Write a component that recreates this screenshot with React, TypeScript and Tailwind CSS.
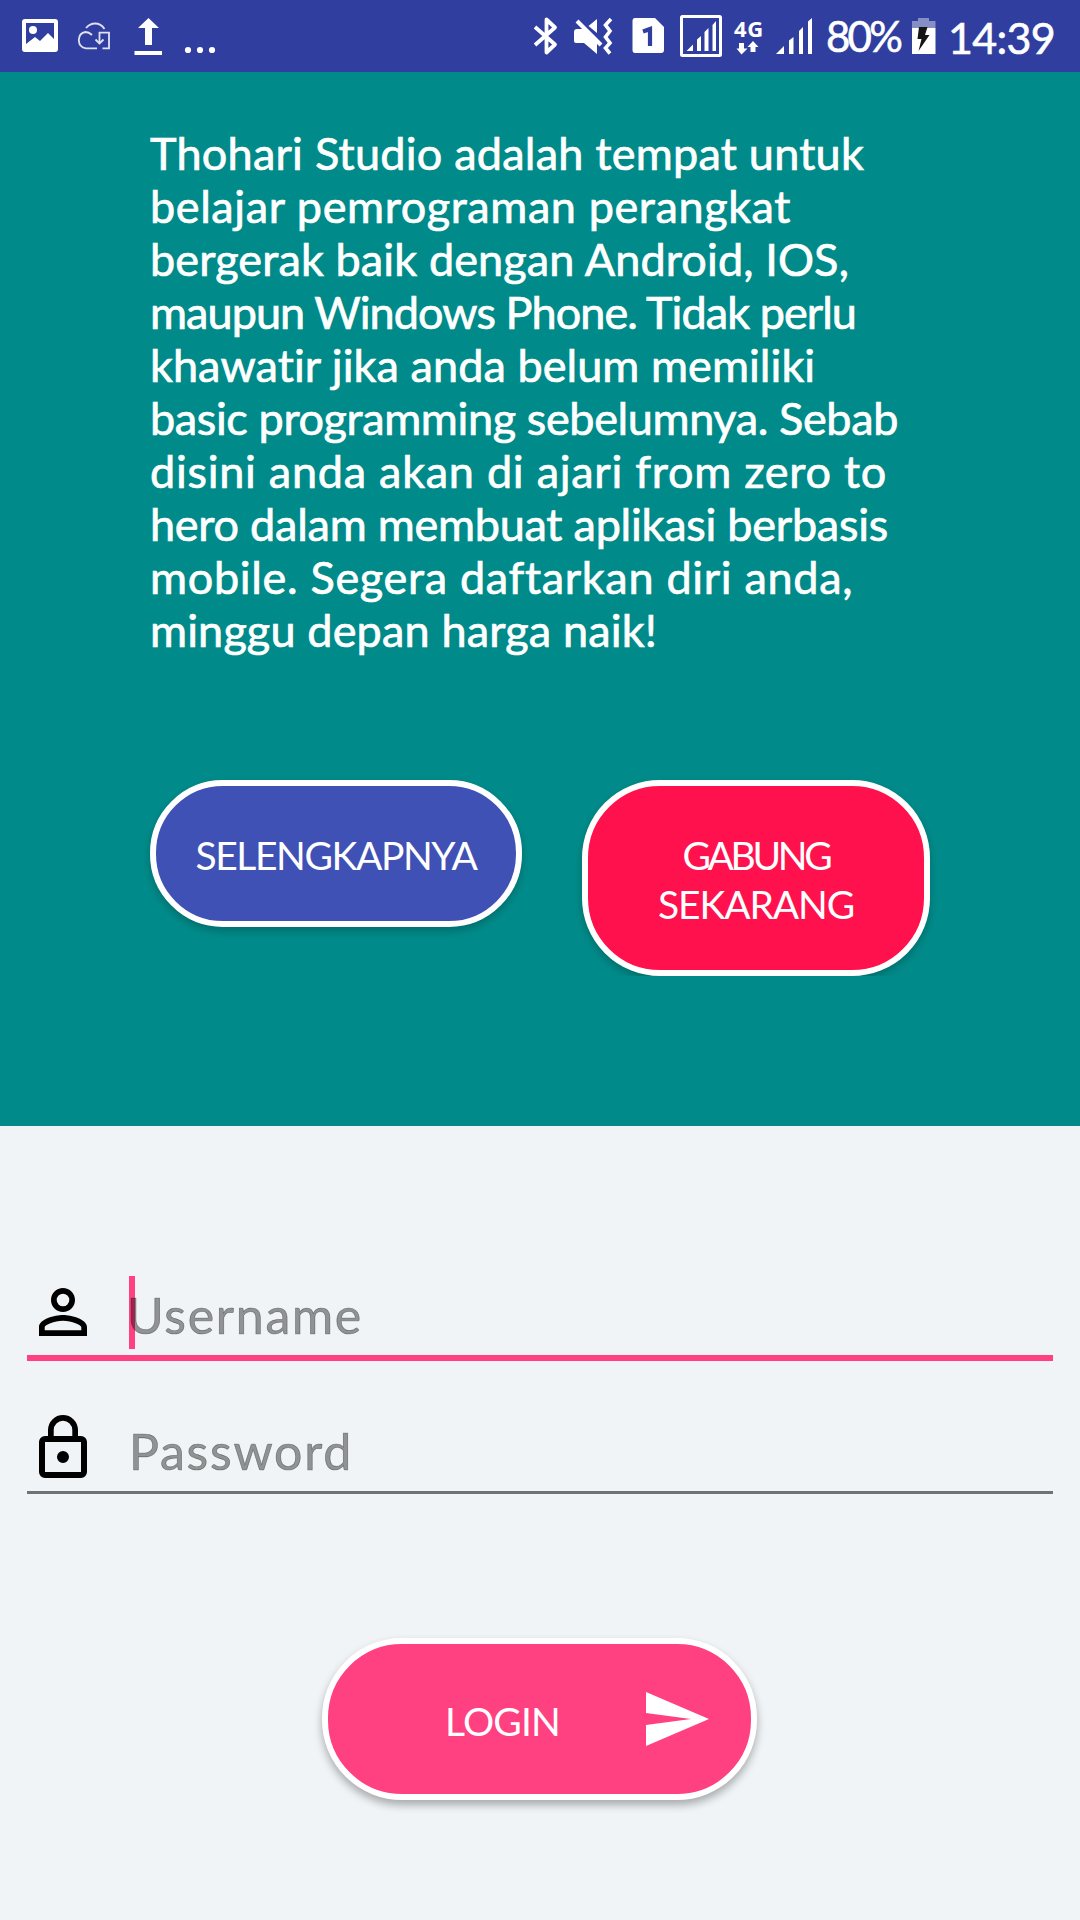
import { useLayoutEffect, useRef } from "react";

/** Single line of text whose tracking is adjusted so that it spans `width` pixels. */
function FitText({ text, width, className = "" }: { text: string; width: number; className?: string }) {
  const ref = useRef<HTMLSpanElement>(null);
  useLayoutEffect(() => {
    const el = ref.current;
    if (!el) return;
    el.style.letterSpacing = "0px";
    const natural = el.getBoundingClientRect().width;
    el.style.letterSpacing = `${(width - natural) / text.length}px`;
  }, [text, width]);
  return (
    <span ref={ref} className={`inline-block w-max whitespace-pre ${className}`}>
      {text}
    </span>
  );
}

const paragraph: { text: string; width: number }[] = [
  { text: "Thohari Studio adalah tempat untuk", width: 714 },
  { text: "belajar pemrograman perangkat", width: 641 },
  { text: "bergerak baik dengan Android, IOS,", width: 699 },
  { text: "maupun Windows Phone. Tidak perlu", width: 706 },
  { text: "khawatir jika anda belum memiliki", width: 666 },
  { text: "basic programming sebelumnya. Sebab", width: 748 },
  { text: "disini anda akan di ajari from zero to", width: 737 },
  { text: "hero dalam membuat aplikasi berbasis", width: 738 },
  { text: "mobile. Segera daftarkan diri anda,", width: 702 },
  { text: "minggu depan harga naik!", width: 507 },
];

function StatusBar() {
  return (
    <header className="flex h-[72px] items-start bg-[#303f9f] text-white">
      <svg className="ml-5 h-[72px] w-10 shrink-0" viewBox="20 0 40 72">
        <path
          fill="currentColor"
          fillRule="evenodd"
          d="M25 19H55Q58 19 58 22V49Q58 52 55 52H25Q22 52 22 49V22Q22 19 25 19ZM26 23V44L35 37L40 41L48 33L54 39V23Z"
        />
        <circle cx="33" cy="30" r="4" fill="currentColor" />
      </svg>
      <svg className="ml-4 h-[72px] w-9 shrink-0" viewBox="76 0 36 72" fill="none" stroke="#dfe2f3" strokeWidth="1.8">
        <path d="M86 28Q90 23.500 95 23.500Q101 23.500 104.500 29" />
        <path d="M92 35Q89 32 85.500 32Q79 33 78.800 40Q79 47.500 86 48.300H97" />
        <path d="M99.500 43V32.600H109V48.300H102.500" />
        <path d="M95.500 39.500L99.500 43.500L103.500 39.500" />
      </svg>
      <svg className="ml-5 h-[72px] w-8 shrink-0" viewBox="132 0 32 72" fill="currentColor">
        <path d="M148.500 18L159 28H152V45H145V28H138Z" />
        <path d="M134.500 51H162V55H134.500Z" />
      </svg>
      <svg className="ml-5 h-[72px] w-8 shrink-0" viewBox="184 0 32 72" fill="currentColor">
        <circle cx="188" cy="50" r="3.100" />
        <circle cx="200" cy="50" r="3.100" />
        <circle cx="212" cy="50" r="3.100" />
      </svg>

      <svg className="ml-auto h-[72px] w-7 shrink-0" viewBox="532 0 28 72" fill="none" stroke="currentColor" strokeWidth="3.800">
        <path d="M535 27L555 44.500L546.500 52.500V19.500L555 27.500L535 45" strokeLinejoin="round" />
      </svg>
      <svg className="ml-3 h-[72px] w-11 shrink-0" viewBox="572 0 44 72">
        <path fill="currentColor" d="M574 32Q574 29 577 29H583L597 43V54L584 43H576Q574 43 574 41Z M597 19V33L588.500 26Z" />
        <path fill="none" stroke="currentColor" strokeWidth="4" d="M577 21L601 45" />
        <path fill="none" stroke="currentColor" strokeWidth="3.600" d="M611 19L605.500 25L610 31L605.500 37L610 43L605.500 48L610 53.500" />
      </svg>
      <svg className="ml-4 h-[72px] w-8 shrink-0" viewBox="632 0 32 72">
        <path fill="currentColor" d="M635 18H655L664 27V50Q664 53 661 53H635Q632.500 53 632.500 50V21Q632.500 18 635 18Z" />
        <path fill="none" stroke="#303f9f" strokeWidth="4.200" d="M643 31.500L650 29V46" />
      </svg>
      <svg className="ml-4 h-[72px] w-[42px] shrink-0" viewBox="680 0 42 72" fill="currentColor">
        <rect x="681.500" y="16.500" width="39" height="39" rx="1" fill="none" stroke="currentColor" strokeWidth="3" />
        <path d="M686.500 51L693 44.500V51Z M697 51V39.500L701 36V51Z M704.500 51V32L708.500 28V51Z M712.500 51V25L716 21V51Z" />
      </svg>
      <div className="ml-3 flex w-[30px] shrink-0 flex-col items-center pt-4">
        <FitText text="4G" width={30} className="font-['Open_Sans'] text-[22px] leading-6 font-bold" />
        <svg className="h-4 w-[30px]" viewBox="734 40 30 16" fill="currentColor">
          <path d="M739 43H744V48.500H747.500L741.500 54.500L736.500 48.500H739Z M750.500 52V47H747.500L753 41L758.500 47H755.500V52Z" />
        </svg>
      </div>
      <svg className="ml-3 h-[72px] w-9 shrink-0" viewBox="776 0 36 72" fill="currentColor">
        <path d="M776 54L784 46V54Z M789 54V40.500L793.500 37V54Z M799 54V31L803 27V54Z M808 54V21.500L812 18V54Z" />
      </svg>
      <FitText text="80%" width={74} className="mr-1 ml-[14px] pt-[10px] text-[42px] leading-[53px] [-webkit-text-stroke:0.6px]" />
      <svg className="ml-2 h-[72px] w-6 shrink-0" viewBox="912 0 24 72">
        <path fill="#868ec6" d="M918 18H929V21H935.500V28H912V21H918Z" />
        <path fill="white" d="M912 28H935.500V54H912Z" />
        <path fill="#151515" d="M919 27H927.500L925 35H929.500L918.500 51L921.500 39H917.500Z" />
      </svg>
      <FitText text="14:39" width={107} className="mr-[25px] ml-3 pt-[11px] text-[43px] leading-[53px] [-webkit-text-stroke:0.6px]" />
    </header>
  );
}

export default function App() {
  return (
    <div className="flex h-[1920px] w-[1080px] flex-col overflow-hidden bg-[#f0f4f7] font-['Lato',sans-serif] text-white">
      <StatusBar />

      <section className="h-[1054px] shrink-0 bg-[#008b8a] px-[150px] pt-[55px]">
        <div className="flex flex-col text-[45px] leading-[53px] [-webkit-text-stroke:0.7px]">
          {paragraph.map((line) => (
            <FitText key={line.text} text={line.text} width={line.width} />
          ))}
        </div>
        <div className="-mx-5 mt-[103px] flex h-[216px] items-start overflow-hidden px-5 pt-5 text-[39px] leading-[49px]">
          <button className="flex h-[147px] w-[372px] shrink-0 items-center justify-center rounded-[73px] border-[6px] border-white bg-[#3f51b5] shadow-[0_4px_8px_rgba(0,0,0,0.22)]">
            <FitText text="SELENGKAPNYA" width={281} className="pt-[4px]" />
          </button>
          <button className="ml-[60px] flex h-[196px] w-[348px] shrink-0 flex-col items-center justify-center rounded-[78px] border-[6px] border-white bg-[#ff114d] pt-[3px] shadow-[0_4px_8px_rgba(0,0,0,0.22)]">
            <FitText text="GABUNG" width={147} />
            <FitText text="SEKARANG" width={196} />
          </button>
        </div>
      </section>

      <main className="flex grow flex-col px-[27px] pt-[150px]">
        <div className="flex h-[85px] items-start border-b-[6px] border-[#ff4081]">
          <svg className="h-[72px] w-[72px] shrink-0 text-black" viewBox="0 0 24 24" fill="currentColor">
            <path d="M12 5.900a2.100 2.100 0 1 1 0 4.200 2.100 2.100 0 0 1 0-4.200m0 9c2.970 0 6.100 1.460 6.100 2.100v1.100H5.900V17c0-.640 3.130-2.100 6.100-2.100M12 4C9.790 4 8 5.790 8 8s1.790 4 4 4 4-1.790 4-4-1.790-4-4-4m0 9c-2.670 0-8 1.340-8 4v3h16v-3c0-2.660-5.330-4-8-4" />
          </svg>
          <div className="ml-[30px] h-[73px] w-1.5 shrink-0 bg-[#ff4081]" />
          <FitText text="Username" width={236} className="-ml-2 pt-[9px] text-[50px] leading-[60px] text-black/40 [-webkit-text-stroke:0.7px]" />
        </div>
        <div className="mt-[48px] flex h-[85px] items-start border-b-[3px] border-[#6f7376]">
          <svg className="mt-[3px] h-[72px] w-[72px] shrink-0 text-black" viewBox="0 0 24 24" fill="currentColor">
            <path
              fillRule="evenodd"
              d="M7 8V6a5 5 0 0 1 10 0v2h1a2 2 0 0 1 2 2v10a2 2 0 0 1-2 2H6a2 2 0 0 1-2-2V10a2 2 0 0 1 2-2ZM8.900 8h6.200V6a3.100 3.100 0 0 0-6.200 0ZM6 10v10h12V10ZM12 13a2 2 0 1 1 0 4 2 2 0 0 1 0-4"
            />
          </svg>
          <FitText text="Password" width={224} className="ml-[30px] pt-[12px] text-[50px] leading-[60px] text-black/40 [-webkit-text-stroke:0.7px]" />
        </div>
        <button className="mt-[144px] ml-[295px] flex h-[162px] w-[435px] items-center rounded-[80px] border-[6px] border-white bg-[#ff4081] shadow-[0_5px_9px_rgba(0,0,0,0.3)]">
          <FitText text="LOGIN" width={115} className="ml-[117px] pt-[4px] text-[39px] leading-[49px]" />
          <svg className="ml-[86px] h-[54px] w-[63px]" viewBox="0 0 63 54" fill="white">
            <path d="M0 0L63 27L0 54V33L45 27L0 21Z" />
          </svg>
        </button>
      </main>
    </div>
  );
}
